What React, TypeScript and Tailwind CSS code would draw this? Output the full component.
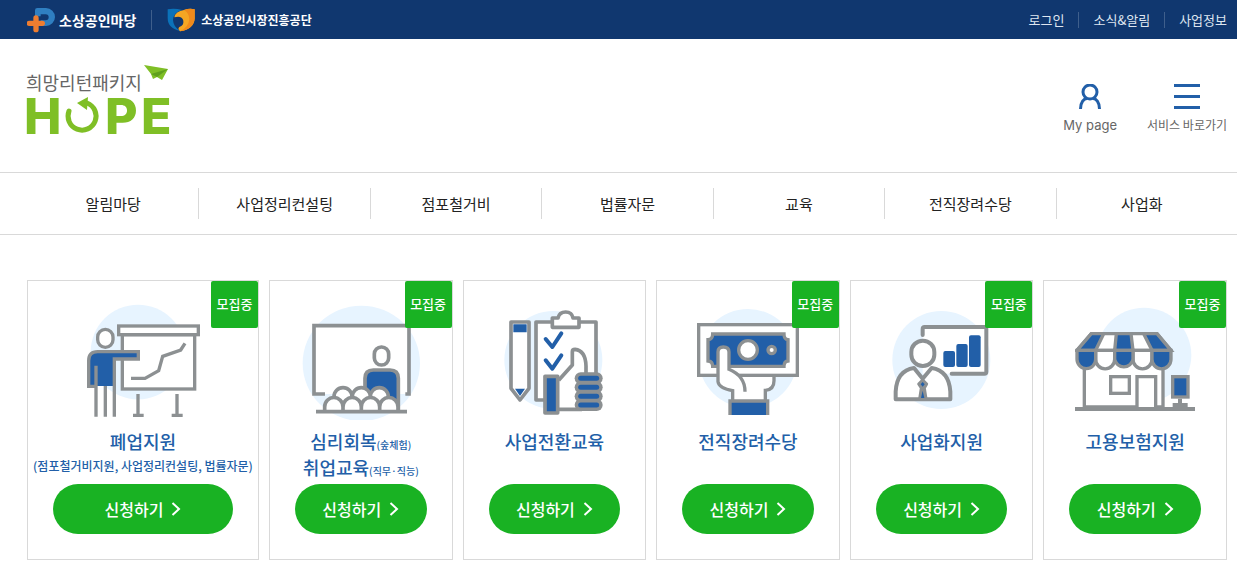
const FONT = "font-['Noto_Sans_CJK_KR','Liberation_Sans',sans-serif]";
const GRAY = "#8c9092";
const BLUE = "#225fa8";
const PALE = "#e7f4ff";

const topLinks = ["로그인", "소식&알림", "사업정보"];

const menus = ["알림마당", "사업정리컨설팅", "점포철거비", "법률자문", "교육", "전직장려수당", "사업화"];

function ClosingArt() {
  return (
    <svg className="w-[120px] h-[120px]" viewBox="189 90 360 360" fill="none" stroke={GRAY} strokeWidth={10} aria-hidden="true">
      <circle cx="354" cy="246" r="142" fill={PALE} stroke="none" />
      <rect x="307" y="194" width="217" height="163" fill="#fff" />
      <rect x="296" y="168" width="239" height="26" fill="#fff" />
      <path d="M333 325H375L416 302L428 259L482 240L495 220" />
      <path d="M354 372V432M339 436H371M471 372V432M455 436H488" />
      <rect x="233" y="178" width="46" height="54" rx="23" fill="#fff" />
      <path d="M206 349V272Q206 245 233 245H355V267H283V348H228Z" fill={BLUE} stroke="none" />
      <path d="M228 349H206V272Q206 245 233 245H355V267H283V440M228 287V440M256 348V440" />
    </svg>
  );
}

function LectureArt() {
  return (
    <svg className="w-[120px] h-[120px]" viewBox="117 90 360 360" fill="none" stroke={GRAY} strokeWidth={11} aria-hidden="true">
      <ellipse cx="298" cy="280" rx="176" ry="173" fill={PALE} stroke="none" />
      <path d="M189 372H156V167H441V372H430" fill="#fff" />
      <rect x="337" y="231" width="43" height="54" rx="21" fill="#fff" />
      <path d="M309 400V325Q309 300 334 300H384Q409 300 409 325V422" fill={BLUE} />
      <circle cx="243" cy="380" r="27" fill="#fff" />
      <circle cx="352" cy="380" r="27" fill="#fff" />
      <circle cx="298" cy="380" r="27" fill="#fff" />
      <path
        d="M188 425V411A27 28 0 0 1 243 411V425M243 425V411A27 28 0 0 1 298 411V425M298 425V411A27 28 0 0 1 353 411V425M353 425V411A27 28 0 0 1 408 411V425"
        fill="#fff"
      />
      <path d="M162 425H435" />
    </svg>
  );
}

function ChecklistArt() {
  const fingers = [325, 352, 379, 405];
  return (
    <svg className="w-[120px] h-[120px]" viewBox="116 90 360 360" fill="none" stroke={GRAY} strokeWidth={11} strokeLinejoin="round" aria-hidden="true">
      <circle cx="294" cy="270" r="147" fill={PALE} stroke="none" />
      <path d="M167 156H221V355L194 390L167 355Z" fill="#fff" />
      <path d="M174 163H214V187H174ZM179 356H209L194 378Z" fill={BLUE} stroke="none" />
      <path d="M242 156H422V390H242Z" fill="#fff" stroke="none" />
      <path d="M268 390H242V156H422V315" />
      <path d="M291 172V144H308Q312 126 331 126Q350 126 353 144H371V172Z" fill="#fff" />
      <path d="M271 207L291 231L318 190M271 271L291 296L318 256" stroke={BLUE} strokeWidth={12} strokeLinecap="round" />
      <path d="M310 331L351 285V245Q351 238 359 238Q391 242 392 288V418H310Z" fill="#fff" stroke="none" />
      <path d="M310 331L351 285V245Q351 238 359 238Q391 242 392 288V312M310 418H380" />
      <rect x="269" y="319" width="38" height="110" fill={BLUE} />
      {fingers.map((y) => (
        <path key={y} d={`M376 ${y}H424`} strokeWidth={36} strokeLinecap="round" />
      ))}
      {fingers.map((y) => (
        <path key={y} d={`M376 ${y}H424`} stroke={BLUE} strokeWidth={15} strokeLinecap="round" />
      ))}
    </svg>
  );
}

function AllowanceArt() {
  return (
    <svg className="w-[120px] h-[120px]" viewBox="114 90 360 360" fill="none" stroke={GRAY} strokeWidth={10} aria-hidden="true">
      <circle cx="294" cy="265" r="148" fill={PALE} stroke="none" />
      <rect x="146" y="164" width="296" height="152" fill="#fff" />
      <path d="M188 192H402Q402 208 414 209V273Q402 274 402 289H188Q188 274 174 273V209Q188 208 188 192Z" fill={BLUE} />
      <circle cx="294" cy="240" r="28" fill="#fff" />
      <circle cx="365" cy="240" r="11" fill="#fff" />
      <path
        d="M204 335V246Q204 231 220 231Q237 231 237 246V298L268 321H372V335Q372 359 346 361V392H248V362Q206 354 204 335Z"
        fill="#fff"
        stroke="none"
      />
      <path d="M248 392V362Q206 354 204 335V246Q204 231 220 231Q237 231 237 246V298Q285 318 285 365M372 320V332Q372 359 346 361V392" />
      <path d="M240 435V393H353V435" fill={BLUE} />
    </svg>
  );
}

function StartupArt() {
  return (
    <svg className="w-[120px] h-[120px]" viewBox="116 90 360 360" fill="none" stroke={GRAY} strokeWidth={12} strokeLinejoin="round" strokeLinecap="round" aria-hidden="true">
      <circle cx="294" cy="270" r="147" fill={PALE} stroke="none" />
      <path d="M238 171H429V311H238Z" fill="#fff" stroke="none" />
      <path d="M238 195V177Q238 171 244 171H423Q429 171 429 177V305Q429 311 423 311H325" />
      <g fill={BLUE} stroke="none">
        <rect x="300" y="243" width="35" height="48" rx="6" />
        <rect x="339" y="222" width="34" height="69" rx="6" />
        <rect x="377" y="196" width="35" height="95" rx="6" />
      </g>
      <rect x="204" y="212" width="69" height="76" rx="34" fill="#fff" />
      <path d="M157 388V365Q160 302 212 294L238 326L265 294Q317 302 321 365V388Z" fill="#fff" />
      <path d="M226 342L238 330L250 342L243 354L248 386H229L234 354Z" fill={GRAY} strokeWidth={9} />
      <path d="M238 336L244 343L238 350L232 343ZM238 362L243 384H233Z" fill={BLUE} stroke="none" />
    </svg>
  );
}

function StoreArt() {
  return (
    <svg className="w-[120px] h-[120px]" viewBox="114 90 360 360" fill="none" stroke={GRAY} strokeWidth={10} aria-hidden="true">
      <circle cx="321" cy="255" r="142" fill={PALE} stroke="none" />
      <path d="M142 280V411H378V280" fill="#fff" />
      <path d="M163 191H360L402 241H120Z" fill="#fff" />
      <path d="M163 191H200L176 241H120ZM238 191H282L288 241H233ZM320 191H360L402 241H345Z" fill={BLUE} strokeLinejoin="round" />
      <path d="M176 241V268A28 28 0 0 0 233 268V241ZM288 241V268A28 28 0 0 0 345 268V241Z" fill="#fff" />
      <path d="M120 241V268A28 28 0 0 0 176 268V241ZM233 241V268A28 28 0 0 0 288 268V241ZM345 241V268A28 28 0 0 0 402 268V241Z" fill={BLUE} />
      <rect x="221" y="320" width="56" height="50" fill="#fff" />
      <path d="M300 411V320H356V411" fill="#fff" />
      <rect x="407" y="320" width="46" height="61" fill={BLUE} />
      <path d="M429 386V402M407 405H452" strokeWidth={12} />
      <path d="M114 417H474" strokeWidth={12} />
    </svg>
  );
}

const cards = [
  { lines: [{ title: "폐업지원" }], note: "(점포철거비지원, 사업정리컨설팅, 법률자문)", open: true, Art: ClosingArt },
  {
    lines: [
      { title: "심리회복", sub: "(숲체험)" },
      { title: "취업교육", sub: "(직무·직능)" },
    ],
    open: true,
    Art: LectureArt,
  },
  { lines: [{ title: "사업전환교육" }], open: false, Art: ChecklistArt },
  { lines: [{ title: "전직장려수당" }], open: true, Art: AllowanceArt },
  { lines: [{ title: "사업화지원" }], open: true, Art: StartupArt },
  { lines: [{ title: "고용보험지원" }], open: true, Art: StoreArt },
] as {
  lines: { title: string; sub?: string }[];
  note?: string;
  open: boolean;
  Art: () => React.JSX.Element;
}[];

function HopeLogo() {
  return (
    <svg className="w-[142px] h-[72px] overflow-visible" viewBox="0 0 142 72" fill="#7fbf26" role="img" aria-label="희망리턴패키지 HOPE">
      <text x="-1" y="25" className="font-['Noto_Sans_CJK_KR',sans-serif] text-[18px]" fill="#666">
        희망리턴패키지
      </text>
      <path d="M117 0L141 4L135 15L130 12L126 14L124 9Z" />
      <path d="M124 9L141 4L130 12" fill="#5fa01c" />
      <g className="font-['Inter',sans-serif] text-[50px] font-extrabold">
        <text x="-3" y="69">H</text>
        <text x="78" y="69">P</text>
        <text x="114" y="69">E</text>
      </g>
      <path d="M42 46A14 14 0 1 0 60 38" fill="none" stroke="#7fbf26" strokeWidth="5" strokeLinecap="round" />
      <path d="M50 38L61 32L60 45Z" />
    </svg>
  );
}

export default function App() {
  return (
    <div className={`min-h-screen bg-white text-[#222] ${FONT}`}>
      {/* Top bar */}
      <div className="bg-[#10376f] text-white">
        <div className="h-[39px] pl-[27px] pr-2.5 flex items-center justify-between">
          <div className="flex items-center">
            <a href="#" className="flex items-center gap-1 text-[14px] leading-5 font-bold">
              <svg className="w-7 h-[26px]" viewBox="81 18 84 78" aria-hidden="true">
                <path d="M112 21H138A27 27 0 0 1 138 75H122V58H137A9 9 0 0 0 137 40H122V46H105V28Q105 21 112 21Z" fill="#2f7fc1" />
                <path d="M108 51V86M88 67H127" stroke="#ee7d30" strokeWidth="16" strokeLinecap="round" />
              </svg>
              소상공인마당
            </a>
            <span className="w-px h-5 mx-[15px] bg-[#3f5f8c]" />
            <a href="#" className="flex items-center gap-1.5 text-[12px] leading-5 font-bold">
              <svg className="w-7 h-6" viewBox="501 22 84 72" aria-hidden="true">
                <path d="M503 26Q524 22 546 28Q520 36 519 58Q520 80 542 91Q503 84 503 52Z" fill="#0b72b9" />
                <path d="M523 50Q526 32 552 28Q568 22 584 26V54Q582 84 540 92Q532 84 538 79Q552 74 550 60Q546 44 523 50Z" fill="#f5a623" />
                <path d="M584 26V54Q582 84 540 92Q566 80 568 56Q568 38 552 28Q568 22 584 26Z" fill="#ef8a1c" />
              </svg>
              소상공인시장진흥공단
            </a>
          </div>
          <ul className="flex items-center text-[13px] leading-4 text-[#dfe6f0]">
            {topLinks.map((name) => (
              <li key={name} className="pl-3.5 ml-3.5 border-l border-[#3f5f8c] first:border-0">
                <a href="#">{name}</a>
              </li>
            ))}
          </ul>
        </div>
      </div>

      {/* Header */}
      <header className="pl-[27px] pr-2.5 pt-[26px] pb-[35px] flex justify-between">
        <a href="#">
          <HopeLogo />
        </a>
        <div className="pt-[19px] flex items-start gap-[30px] text-[12px] leading-4 text-[#666]">
          <a href="#" className="flex flex-col items-center gap-2">
            <svg className="w-[26px] h-[25px]" viewBox="0 0 26 25" fill="none" stroke="#225fa8" strokeWidth="3" aria-hidden="true">
              <circle cx="13" cy="8" r="7" />
              <path d="M3.500 25C3.500 18 7 14.500 10 14.500M22.500 25C22.500 18 19 14.500 16 14.500" />
            </svg>
            <span className="font-['Inter',sans-serif] text-[13px]">My page</span>
          </a>
          <button className="flex flex-col items-center gap-2">
            <svg className="w-[26px] h-[25px]" viewBox="0 0 26 25" stroke="#225fa8" strokeWidth="3" aria-hidden="true">
              <path d="M0 1.500H26M0 12.500H26M0 23.500H26" />
            </svg>
            서비스 바로가기
          </button>
        </div>
      </header>

      {/* Main menu */}
      <nav className="pl-[27px] pr-2.5 py-[15px] border-y border-[#d9d9d9]">
        <ul className="grid grid-cols-7 text-[15px] leading-[31px] text-center">
          {menus.map((name) => (
            <li key={name} className="border-l border-[#d9d9d9] first:border-transparent">
              <a href="#">{name}</a>
            </li>
          ))}
        </ul>
      </nav>

      {/* Support programs */}
      <main className="pl-[27px] pr-2.5 pt-[45px] grid grid-cols-[232px_repeat(5,minmax(0,1fr))] gap-2.5">
        {cards.map(({ lines, note, open, Art }) => (
          <section key={lines[0].title} className="relative pt-[19px] pb-[25px] border border-[#d9d9d9] flex flex-col items-center">
            <Art />
            {open && (
              <span className="absolute top-0 right-0 w-[47px] h-[47px] rounded-[2px] bg-[#19b223] text-white text-[13px] leading-[46px] font-medium text-center">
                모집중
              </span>
            )}
            <div className="mt-2 h-14 text-center whitespace-nowrap text-[#225fa8]">
              {lines.map(({ title, sub }) => (
                <h2 key={title} className="h-[26px] text-[18px] leading-[26px] font-medium">
                  {title}
                  {sub && <small className="text-[10px] leading-none">{sub}</small>}
                </h2>
              ))}
              {note && <p className="text-[12px] leading-[23px] font-medium">{note}</p>}
            </div>
            <div className="w-full px-[25px]">
              <a href="#" className="h-[50px] rounded-full bg-[#19b223] text-white text-[16px] font-medium flex items-center justify-center gap-2">
                신청하기
                <svg className="w-[10px] h-[14px]" viewBox="0 0 10 14" fill="none" stroke="currentColor" strokeWidth="2" aria-hidden="true">
                  <path d="M1.500 1L8 7L1.500 13" />
                </svg>
              </a>
            </div>
          </section>
        ))}
      </main>
    </div>
  );
}
